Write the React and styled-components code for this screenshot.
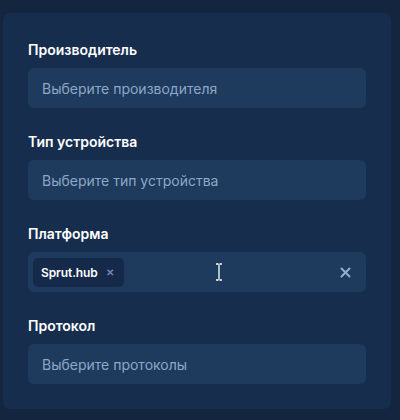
import React from 'react'
import styled, { createGlobalStyle } from 'styled-components'

const Global = createGlobalStyle`
  html, body {
    margin: 0;
    padding: 0;
    background: #13253f;
  }
  body {
    font-family: Inter, 'Noto Sans', sans-serif;
    -webkit-font-smoothing: antialiased;
  }
`

const Page = styled.div`
  width: 400px;
  height: 420px;
  padding: 13px 9px 0 3px;
  box-sizing: border-box;
  background: #13253f;
`

const Card = styled.div`
  background: #162d4d;
  border-radius: 7px;
  padding: 27px 25px 25px 25px;
  display: flex;
  flex-direction: column;
  gap: 24px;
`

const Field = styled.div`
  display: flex;
  flex-direction: column;
  gap: 8px;
`

const Label = styled.div`
  font-size: 14px;
  line-height: 20px;
  font-weight: 600;
  color: #ffffff;
`

const Select = styled.div`
  position: relative;
  height: 40px;
  border-radius: 6px;
  background: #1e3a5d;
  display: flex;
  align-items: center;
  padding: 0 14px 0 ${p => (p.$chips ? '5px' : '14px')};
  box-sizing: border-box;
`

const Placeholder = styled.span`
  font-size: 14px;
  color: #8da7c9;
`

const Chip = styled.div`
  height: 29px;
  background: #15294a;
  border-radius: 5px;
  display: flex;
  align-items: center;
  gap: 8px;
  padding: 0 10px 0 8px;
  font-size: 12px;
  font-weight: 600;
  letter-spacing: -0.1px;
  color: #ffffff;
`

const ChipX = styled.span`
  font-size: 10px;
  font-weight: 700;
  color: #7288a8;
  line-height: 1;
`

const Spacer = styled.div`
  flex: 1;
`

const Clear = styled.svg`
  width: 11px;
  height: 11px;
  margin-right: 1px;
`

const Cursor = styled.svg`
  position: absolute;
  left: 187px;
  top: 11px;
  width: 8px;
  height: 18px;
`

export default function App() {
  return (
    <Page>
      <Global />
      <Card>
        <Field>
          <Label>Производитель</Label>
          <Select>
            <Placeholder>Выберите производителя</Placeholder>
          </Select>
        </Field>
        <Field>
          <Label>Тип устройства</Label>
          <Select>
            <Placeholder>Выберите тип устройства</Placeholder>
          </Select>
        </Field>
        <Field>
          <Label>Платформа</Label>
          <Select $chips>
            <Chip>
              Sprut.hub
              <ChipX>✕</ChipX>
            </Chip>
            <Spacer />
            <Clear viewBox="0 0 11 11">
              <path d="M1.5 1.5L9.5 9.5M9.5 1.5L1.5 9.5" stroke="#93aed0" strokeWidth="2" strokeLinecap="round" />
            </Clear>
            <Cursor viewBox="0 0 8 18">
              <path d="M1 1H3.5M4.5 1H7M4 1.5V16.5M1 17H3.5M4.5 17H7" stroke="#ffffff" strokeWidth="1.3" fill="none" />
            </Cursor>
          </Select>
        </Field>
        <Field>
          <Label>Протокол</Label>
          <Select>
            <Placeholder>Выберите протоколы</Placeholder>
          </Select>
        </Field>
      </Card>
    </Page>
  )
}
